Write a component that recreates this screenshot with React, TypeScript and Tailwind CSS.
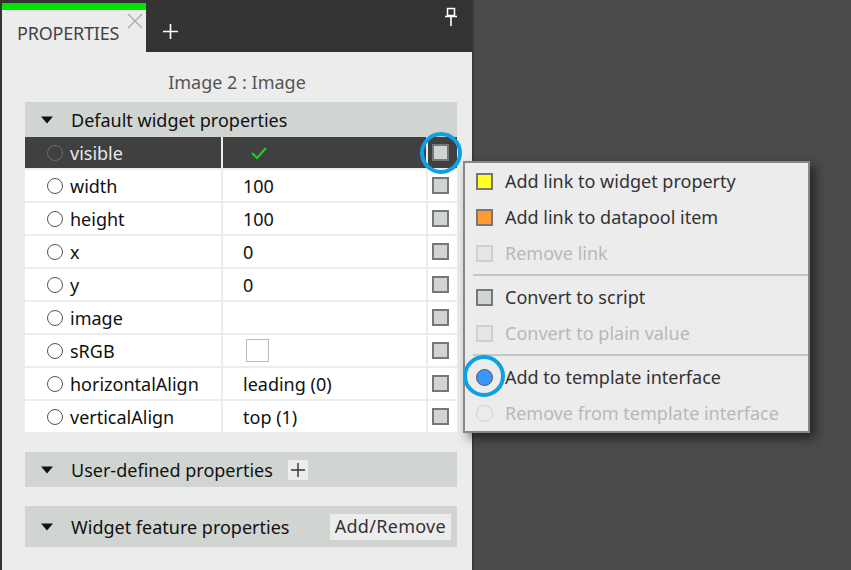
import React from "react";

const font = { fontFamily: '"Noto Sans", "Open Sans", sans-serif' };

type Row = { name: string; value?: string; kind?: "check" | "color" };

const rows: Row[] = [
  { name: "visible", kind: "check" },
  { name: "width", value: "100" },
  { name: "height", value: "100" },
  { name: "x", value: "0" },
  { name: "y", value: "0" },
  { name: "image", value: "" },
  { name: "sRGB", kind: "color" },
  { name: "horizontalAlign", value: "leading (0)" },
  { name: "verticalAlign", value: "top (1)" },
];

const Triangle = () => (
  <svg width="14" height="8" viewBox="0 0 14 8" className="shrink-0">
    <polygon points="1,0.5 13,0.5 7,7.5" fill="#111" />
  </svg>
);

const PropRow = ({ row, active }: { row: Row; active?: boolean }) => {
  const cell = active ? "bg-[#404040] text-[#e8e8e8]" : "bg-white text-[#111]";
  return (
    <div className="grid grid-cols-[196px_203px_29px] gap-x-[2px] h-[31px]">
      <div className={`${cell} flex items-center pl-[22px] gap-[7px]`}>
        <span
          className={`w-[16px] h-[16px] rounded-full border ${active ? "border-[#6a6a6a]" : "border-[#555]"}`}
        />
        <span className="text-[18px] leading-none mt-[1px]">{row.name}</span>
      </div>
      <div className={`${cell} flex items-center pl-[20px] text-[18px] leading-none`}>
        {row.kind === "check" && (
          <svg width="18" height="14" viewBox="0 0 18 14" className="ml-[7px]">
            <polyline points="2,7 7,12 16,2" fill="none" stroke="#22cc22" strokeWidth="2.2" />
          </svg>
        )}
        {row.kind === "color" && (
          <span className="ml-[3px] w-[23px] h-[23px] bg-white border border-[#bbb]" />
        )}
        <span className="mt-[1px]">{row.value}</span>
      </div>
      <div className={`${active ? "bg-[#404040]" : "bg-white"} flex items-center pl-[4px]`}>
        <span className="w-[17px] h-[17px] border-2 border-[#777] bg-[#d0d5d1]" />
      </div>
    </div>
  );
};

const MenuItem = ({
  label,
  icon,
  disabled,
}: {
  label: string;
  icon: React.ReactNode;
  disabled?: boolean;
}) => (
  <div className={`h-[36px] flex items-center pl-[11px] gap-[12px] text-[18px] ${disabled ? "text-[#b8b8b8]" : "text-[#333]"}`}>
    {icon}
    <span>{label}</span>
  </div>
);

const Box = ({ fill, border }: { fill: string; border: string }) => (
  <span className="w-[17px] h-[17px] border-2" style={{ background: fill, borderColor: border }} />
);

const Sep = () => <div className="ml-[8px] my-[3px] h-[2px] bg-[#c4c8c4]" />;

export default function App() {
  return (
    <div className="relative w-[851px] h-[570px] bg-[#4b4b4b] overflow-hidden" style={font}>
      <div className="w-[474px] h-full flex flex-col bg-[#ececec] border-l-2 border-r-2 border-l-[#333] border-r-[#3a3a3a]">
        {/* tab bar */}
        <div className="h-[52px] bg-[#333] pt-[3px] flex items-stretch relative shrink-0">
          <div className="w-[144px] bg-[#ececec] border-t-[7px] border-[#00e600] relative flex items-center pl-[15px]">
            <span className="text-[18px] text-[#444] tracking-[-0.2px] mt-[5px]">PROPERTIES</span>
            <svg width="16" height="16" viewBox="0 0 16 16" className="absolute right-[3px] top-[3px]">
              <path d="M1 1L15 15M15 1L1 15" stroke="#aaa" strokeWidth="1.3" />
            </svg>
          </div>
          <div className="w-[48px] flex items-center justify-center pt-[7px]">
            <svg width="15" height="15" viewBox="0 0 15 15">
              <path d="M7.5 0V15M0 7.5H15" stroke="#fff" strokeWidth="1.6" />
            </svg>
          </div>
          <svg width="12" height="19" viewBox="0 0 12 19" className="absolute left-[443px] top-[7px]">
            <rect x="2.5" y="1.5" width="7" height="7" fill="none" stroke="#fff" strokeWidth="1.5" />
            <path d="M0 9.5H12M6 9.5V19" stroke="#fff" strokeWidth="1.6" />
          </svg>
        </div>

        {/* body */}
        <div className="h-[50px] flex items-center justify-center text-[18px] text-[#555] shrink-0 pt-[11px]">
          Image 2 : Image
        </div>

        <div className="ml-[23px] w-[432px] flex flex-col">
          <div className="h-[35px] bg-[#d0d5d1] flex items-center pl-[15px] gap-[17px] text-[18px] text-[#111]">
            <Triangle />
            <span className="mt-[1px]">Default widget properties</span>
          </div>
          <div className="flex flex-col gap-y-[2px]">
            {rows.map((r, i) => (
              <PropRow key={r.name} row={r} active={i === 0} />
            ))}
          </div>

          <div className="mt-[20px] h-[35px] bg-[#d0d5d1] flex items-center pl-[15px] gap-[17px] text-[18px] text-[#111]">
            <Triangle />
            <span className="mt-[1px]">User-defined properties</span>
            <span className="ml-[-2px] w-[20px] h-[20px] bg-[#ececec] flex items-center justify-center">
              <svg width="14" height="14" viewBox="0 0 14 14">
                <path d="M7 0V14M0 7H14" stroke="#333" strokeWidth="1.4" />
              </svg>
            </span>
          </div>

          <div className="mt-[19px] h-[41px] bg-[#d0d5d1] flex items-center pl-[15px] gap-[17px] text-[18px] text-[#111]">
            <Triangle />
            <span className="mt-[1px]">Widget feature properties</span>
            <span className="ml-auto mr-[6px] h-[26px] px-[5px] bg-[#ececec] text-[#333] flex items-center tracking-[0.3px]">
              Add/Remove
            </span>
          </div>
        </div>
      </div>

      {/* context menu */}
      <div className="absolute left-[463px] top-[161px] w-[347px] border-2 border-[#888] bg-[#ececec] shadow-[5px_5px_10px_rgba(0,0,0,0.55)] flex flex-col">
        <MenuItem label="Add link to widget property" icon={<Box fill="#ffff22" border="#777" />} />
        <MenuItem label="Add link to datapool item" icon={<Box fill="#ff9933" border="#777" />} />
        <MenuItem label="Remove link" disabled icon={<Box fill="#e6e6e6" border="#cfcfcf" />} />
        <Sep />
        <MenuItem label="Convert to script" icon={<Box fill="#d0d5d1" border="#777" />} />
        <MenuItem label="Convert to plain value" disabled icon={<Box fill="#e6e6e6" border="#cfcfcf" />} />
        <Sep />
        <MenuItem
          label="Add to template interface"
          icon={<span className="w-[17px] h-[17px] rounded-full bg-[#3b95ff] border border-[#555]" />}
        />
        <MenuItem
          label="Remove from template interface"
          disabled
          icon={<span className="w-[17px] h-[17px] rounded-full border border-[#cfcfcf]" />}
        />
      </div>

      {/* highlight rings */}
      <span className="absolute left-[420px] top-[132px] w-[42px] h-[42px] rounded-full border-4 border-[#0ea0e4]" />
      <span className="absolute left-[463px] top-[355px] w-[42px] h-[42px] rounded-full border-4 border-[#0ea0e4]" />
    </div>
  );
}
